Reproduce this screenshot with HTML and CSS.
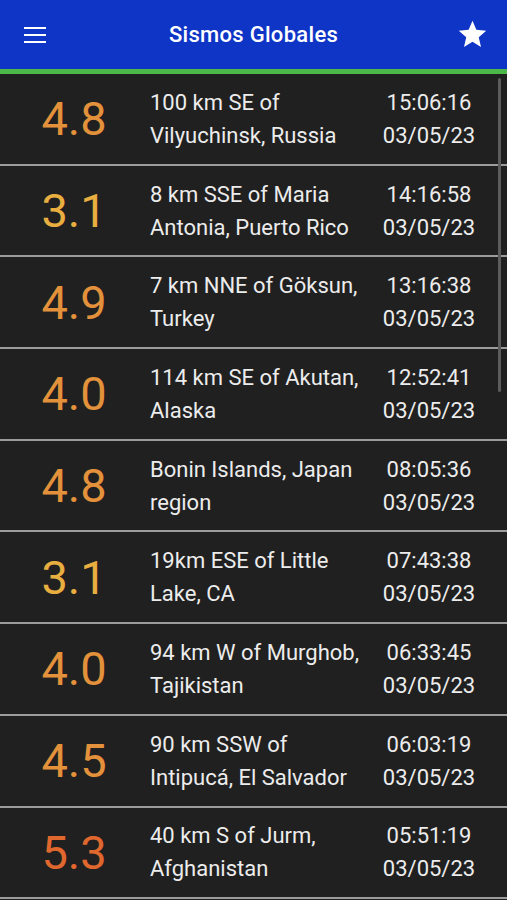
FILE: index.html
```html
<!doctype html>
<html>
<head>
  <meta charset='UTF-8'>
  <title>Sismos Globales</title>
  <link rel="stylesheet" href="styles.css">
</head>
<body>
  <header class='bar'>
    <span class='menu'><i></i><i></i><i></i></span>
    <h1>Sismos Globales</h1>
    <svg class='star' viewBox='0 0 24 24' width='33' height='33'><path fill='#fff' d='M12 17.27L18.18 21l-1.64-7.03L22 9.24l-7.19-.61L12 2 9.19 8.63 2 9.24l5.46 4.73L5.82 21z'/></svg>
  </header>
  <main class='list'>
    <div class='row'><span class='mag mid'>4.8</span><span class='place'>100 km SE of Vilyuchinsk, Russia</span><span class='when'>15:06:16<br>03/05/23</span></div>
    <div class='row'><span class='mag low'>3.1</span><span class='place'>8 km SSE of Maria Antonia, Puerto Rico</span><span class='when'>14:16:58<br>03/05/23</span></div>
    <div class='row'><span class='mag mid'>4.9</span><span class='place'>7 km NNE of Göksun, Turkey</span><span class='when'>13:16:38<br>03/05/23</span></div>
    <div class='row'><span class='mag mid'>4.0</span><span class='place'>114 km SE of Akutan, Alaska</span><span class='when'>12:52:41<br>03/05/23</span></div>
    <div class='row'><span class='mag mid'>4.8</span><span class='place'>Bonin Islands, Japan region</span><span class='when'>08:05:36<br>03/05/23</span></div>
    <div class='row'><span class='mag low'>3.1</span><span class='place'>19km ESE of Little Lake, CA</span><span class='when'>07:43:38<br>03/05/23</span></div>
    <div class='row'><span class='mag mid'>4.0</span><span class='place'>94 km W of Murghob, Tajikistan</span><span class='when'>06:33:45<br>03/05/23</span></div>
    <div class='row'><span class='mag mid'>4.5</span><span class='place'>90 km SSW of Intipucá, El Salvador</span><span class='when'>06:03:19<br>03/05/23</span></div>
    <div class='row'><span class='mag high'>5.3</span><span class='place'>40 km S of Jurm, Afghanistan</span><span class='when'>05:51:19<br>03/05/23</span></div>
    <div class='scroll'></div>
  </main>
</body>
</html>
```
FILE: styles.css
```css
html, body {
  margin: 0;
  height: 100%;
  overflow: hidden;
  background: #202020;
  font-family: Roboto, "Liberation Sans", sans-serif;
}
.bar {
  height: 69px;
  background: #0f35c6;
  border-bottom: 5px solid #4cb848;
  display: grid;
  grid-template-columns: 70px 1fr 70px;
  align-items: center;
  color: #fff
}
.bar h1 {
  margin: 0;
  font-size: 22px;
  font-weight: 500;
  text-align: center;
  letter-spacing: .3px
}
.menu {
  display: flex;
  flex-direction: column;
  gap: 5px;
  width: 22px;
  margin-left: 24px
}
.menu i {
  display: block;
  height: 2px;
  background: #fff
}
.star { justify-self: end; margin-right: 18px }
.list { position: relative }
.row {
  box-sizing: border-box;
  height: 91.7px;
  border-bottom: 2px solid #9c9c9c;
  display: grid;
  grid-template-columns: 150px 1fr 96px;
  align-items: center;
  padding-right: 30px
}
.mag {
  font-size: 47px;
  font-weight: 400;
  text-align: center;
  padding-right: 2px
}
.mid { color: #e3913b }
.low { color: #e8ae40 }
.high { color: #e0682f }
.place, .when {
  font-size: 22px;
  line-height: 33px;
  color: #ececec
}
.place { padding-right: 16px }
.when { text-align: center }
.scroll {
  position: absolute;
  top: 4px;
  left: 498px;
  width: 3px;
  height: 314px;
  border-radius: 2px;
  background: #5c5c5c
}
```
